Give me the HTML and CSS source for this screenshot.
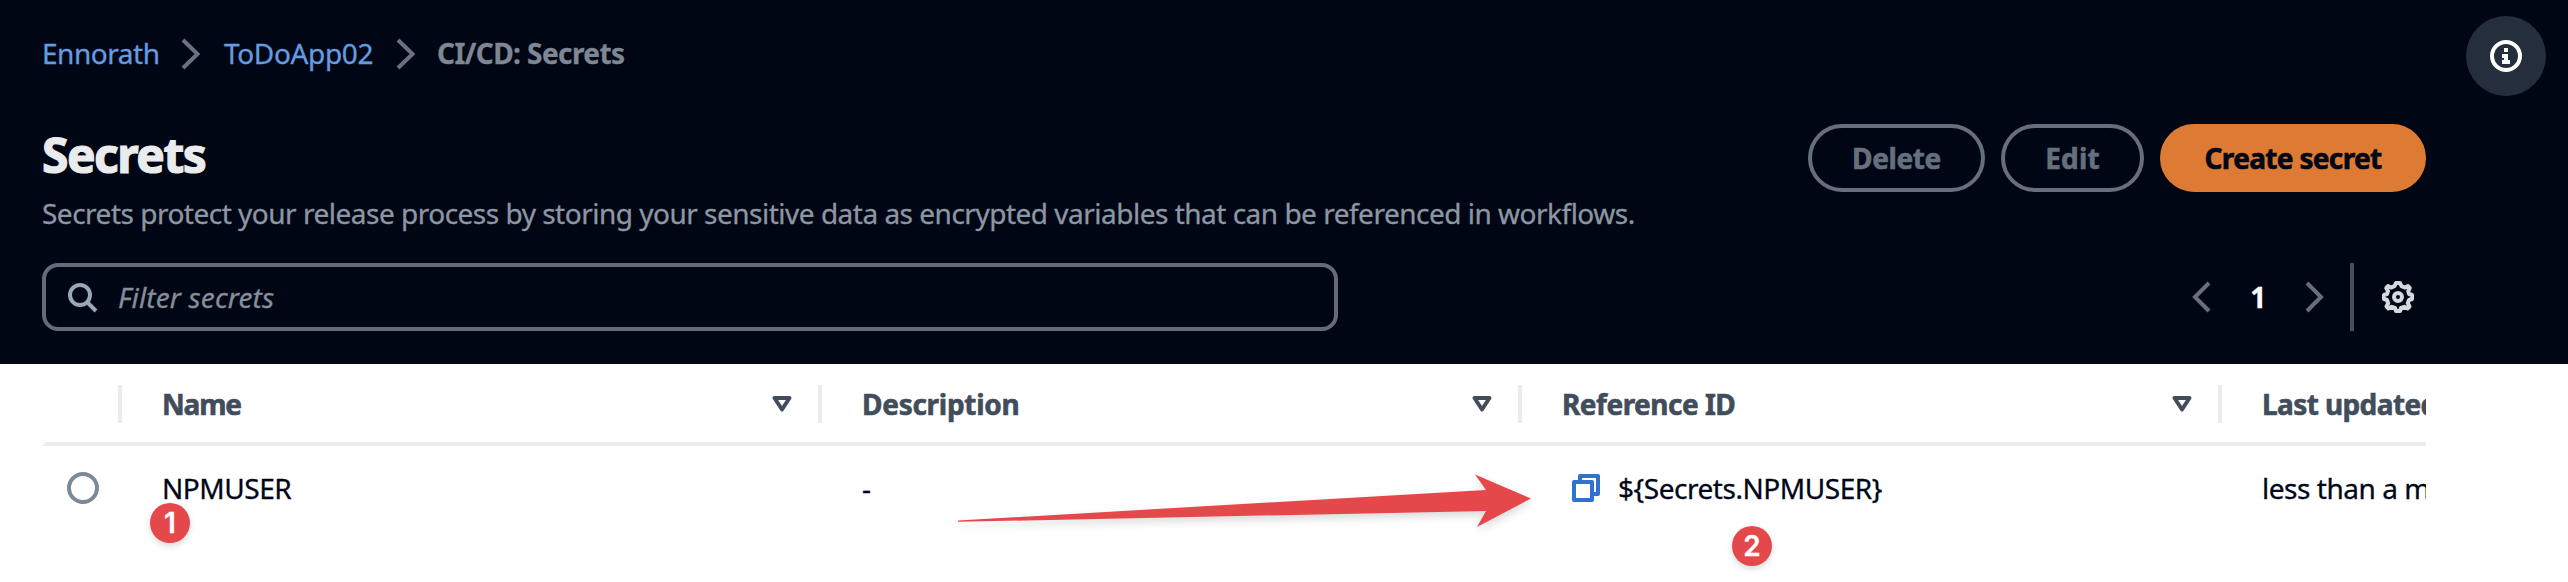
FILE: index.html
```html
<!DOCTYPE html>
<html lang="en">
<head>
<meta charset="utf-8">
<title>CI/CD: Secrets</title>
<link rel="stylesheet" href="styles.css">
</head>
<body>
<header class="top">
  <nav class="crumbs">
    <a class="crumb-link" href="#">Ennorath</a>
    <svg class="crumb-sep" width="20" height="32" viewBox="0 0 20 32"><path d="M2 2 L16.500 16 L2 30" fill="none" stroke="#687282" stroke-width="4"/></svg>
    <a class="crumb-link app" href="#">ToDoApp02</a>
    <svg class="crumb-sep second" width="20" height="32" viewBox="0 0 20 32"><path d="M2 2 L16.500 16 L2 30" fill="none" stroke="#687282" stroke-width="4"/></svg>
    <span class="crumb-current">CI/CD: Secrets</span>
  </nav>
  <div class="title-row">
    <div class="title-block">
      <h1 class="title">Secrets</h1>
      <p class="lead">Secrets protect your release process by storing your sensitive data as encrypted variables that can be referenced in workflows.</p>
    </div>
    <div class="actions">
      <button class="btn delete">Delete</button>
      <button class="btn edit">Edit</button>
      <button class="btn create">Create secret</button>
    </div>
  </div>
  <div class="tools">
    <div class="filter">
      <svg class="search" width="32" height="32" viewBox="0 0 32 32" fill="none" stroke="#9ba7b6" stroke-width="4"><circle cx="13" cy="14" r="10"/><path d="M20 21 L29 30"/></svg>
      <span class="placeholder">Filter secrets</span>
    </div>
    <div class="pager">
      <svg width="20" height="32" viewBox="0 0 20 32"><path d="M18 2 L4 16 L18 30" fill="none" stroke="#656f7e" stroke-width="4"/></svg>
      <span class="page">1</span>
      <svg width="20" height="32" viewBox="0 0 20 32"><path d="M2 2 L16 16 L2 30" fill="none" stroke="#656f7e" stroke-width="4"/></svg>
      <span class="rule"></span>
      <svg width="32" height="32" viewBox="0 0 32 32" fill="none" stroke="#d5d9de" stroke-width="4"><path stroke-linejoin="round" d="M14 2H18L19.500 5.200L23 6.600L26 5L27.800 7L26.200 10L27 13L30 14V18L27 19L25.800 22.300L27.500 25.500L25.500 27.500L22.300 25.800L19 27L18 30H14L13 27L9.700 25.800L6.500 27.500L4.500 25.500L6.200 22.300L5 19L2 18V14L5 13L6 10L4.200 7L6 5L9 6.600L12.500 5.200Z"/><circle cx="16" cy="16" r="4"/></svg>
    </div>
  </div>
  <button class="info" aria-label="Info">
    <svg width="32" height="32" viewBox="0 0 32 32"><circle cx="16" cy="16" r="14" fill="none" stroke="#fff" stroke-width="4"/><path d="M14 8h4v4h-4zM12 14h6v6h2v4h-8v-4h2v-2h-2z" fill="#fff"/></svg>
  </button>
</header>
<main class="table">
  <div class="row head">
    <div class="cell select"></div>
    <div class="cell"><span class="name">Name</span><svg class="sort" width="20" height="16" viewBox="0 0 20 16"><path d="M2.500 2H17.500L10 13.500Z" fill="none" stroke="#424d5c" stroke-width="4" stroke-linejoin="round"/></svg></div>
    <div class="cell"><span class="desc">Description</span><svg class="sort" width="20" height="16" viewBox="0 0 20 16"><path d="M2.500 2H17.500L10 13.500Z" fill="none" stroke="#424d5c" stroke-width="4" stroke-linejoin="round"/></svg></div>
    <div class="cell"><span class="ref">Reference ID</span><svg class="sort" width="20" height="16" viewBox="0 0 20 16"><path d="M2.500 2H17.500L10 13.500Z" fill="none" stroke="#424d5c" stroke-width="4" stroke-linejoin="round"/></svg></div>
    <div class="cell"><span class="upd">Last updated</span></div>
  </div>
  <div class="row body">
    <div class="cell select"><span class="radio"></span></div>
    <div class="cell">NPMUSER</div>
    <div class="cell">-</div>
    <div class="cell"><svg class="copy" width="28" height="28" viewBox="0 0 28 28" fill="none" stroke="#3270d0" stroke-width="4" stroke-linejoin="round"><rect x="2" y="8" width="18" height="18"/><path d="M8 8V2H26V20H20"/></svg>${Secrets.NPMUSER}</div>
    <div class="cell">less than a minute ago</div>
  </div>
</main>
<svg class="arrow" width="590" height="80" viewBox="950 460 590 80"><path d="M958 520.500L1486 490L1475 474.500L1531 498.500L1477 527L1486 511L958 521.800Z" fill="#e5484a"/></svg>
<span class="badge one">1</span>
<span class="badge two">2</span>
</body>
</html>
```
FILE: styles.css
```css
* { box-sizing: border-box; }
body {
  margin: 0;
  width: 2568px;
  height: 582px;
  position: relative;
  overflow: hidden;
  background: #fff;
  color: #000716;
  font: 28px/40px "Noto Sans", sans-serif;
  letter-spacing: -0.46px;
  -webkit-text-stroke: 0.3px currentColor;
}
svg { display: block; flex: none; }
.top {
  height: 364px;
  padding: 33px 142px 0 42px;
  background: #000613;
}
.crumbs { display: flex; height: 40px; align-items: center; }
.crumb-link { color: #659ce0; text-decoration: none; width: 139px; white-space: nowrap; }
.crumb-link.app { letter-spacing: -0.35px; width: 172px; margin-left: 23px; }
.crumb-current {
  margin-left: 21px;
  color: #7f8794;
  font-weight: 700;
  letter-spacing: -0.58px;
}
.crumb-sep { margin-top: 2px; }
.title-row { display: flex; justify-content: space-between; margin-top: 50px; height: 110px; }
.title {
  margin: 0;
  padding-top: 2px;
  font-size: 48px;
  line-height: 60px;
  font-weight: 700;
  color: #e9ebed;
  letter-spacing: -1.5px;
  -webkit-text-stroke: 1.2px currentColor;
}
.lead {
  margin: 8px 0 0;
  color: #8d96a4;
  letter-spacing: -0.5px;
  white-space: nowrap;
}
.actions { display: flex; gap: 16px; padding-top: 1px; }
.btn {
  height: 68px;
  padding: 0;
  border: 4px solid #656f7e;
  border-radius: 34px;
  background: transparent;
  color: #656f7e;
  font: inherit;
  font-weight: 700;
  -webkit-text-stroke: 0.6px currentColor;
}
.delete { width: 177px; letter-spacing: -0.38px; }
.edit { width: 143px; letter-spacing: 0.2px; }
.create {
  width: 266px;
  background: #dd7a33;
  border-color: #dd7a33;
  color: #000716;
  letter-spacing: -0.67px;
}
.tools { display: flex; justify-content: space-between; margin-top: 30px; }
.filter {
  display: flex;
  align-items: center;
  gap: 18px;
  width: 1296px;
  height: 68px;
  padding-left: 21px;
  border: 4px solid #626c7b;
  border-radius: 16px;
}
.placeholder { font-style: italic; color: #858e9b; letter-spacing: 0.15px; margin-left: 1px; }
.pager { display: flex; align-items: center; width: 235px; }
.page { width: 94px; text-align: center; color: #fff; font-weight: 700; }
.rule { width: 4px; height: 68px; margin: 0 28px 0 25px; background: #465060; }
.info {
  position: absolute;
  left: 2466px;
  top: 16px;
  width: 80px;
  height: 80px;
  padding: 0;
  border: 0;
  border-radius: 50%;
  background: #252e3c;
  display: grid;
  place-items: center;
}
.table { width: 2384px; margin-left: 42px; overflow: hidden; }
.row { display: grid; grid-template-columns: 80px repeat(4, 700px); width: 2880px; }
.cell { display: flex; align-items: center; padding-left: 40px; white-space: nowrap; }
.head {
  height: 82px;
  padding: 21px 0 19px;
  border-bottom: 4px solid #e9ebed;
  border-left: 4px solid transparent;
  color: #424d5c;
  font-weight: 700;
  grid-template-columns: 76px repeat(4, 700px);
  -webkit-text-stroke: 0.6px currentColor;
}
.head .cell { height: 38px; justify-content: space-between; padding-right: 26px; border-right: 4px solid #e9ebed; }
.name { letter-spacing: -1.2px; }
.desc { letter-spacing: -0.28px; }
.ref { letter-spacing: -0.5px; }
.upd { letter-spacing: -0.6px; }
.body { height: 84px; }
.select { padding-left: 25px; }
.radio { width: 32px; height: 32px; border: 4px solid #7d8998; border-radius: 50%; }
.copy { margin: 0 18px 0 10px; }
.arrow {
  position: absolute;
  left: 950px;
  top: 460px;
  filter: drop-shadow(0 4px 4px rgba(0, 0, 0, 0.15));
}
.badge {
  position: absolute;
  width: 40px;
  height: 40px;
  border-radius: 50%;
  background: #e5484a;
  color: #fff;
  font: 600 28px/40px Inter, sans-serif;
  letter-spacing: 0;
  text-align: center;
  box-shadow: 0 3px 6px rgba(0, 0, 0, 0.15);
}
.one { left: 150px; top: 503px; }
.two { left: 1732px; top: 526px; }
```
